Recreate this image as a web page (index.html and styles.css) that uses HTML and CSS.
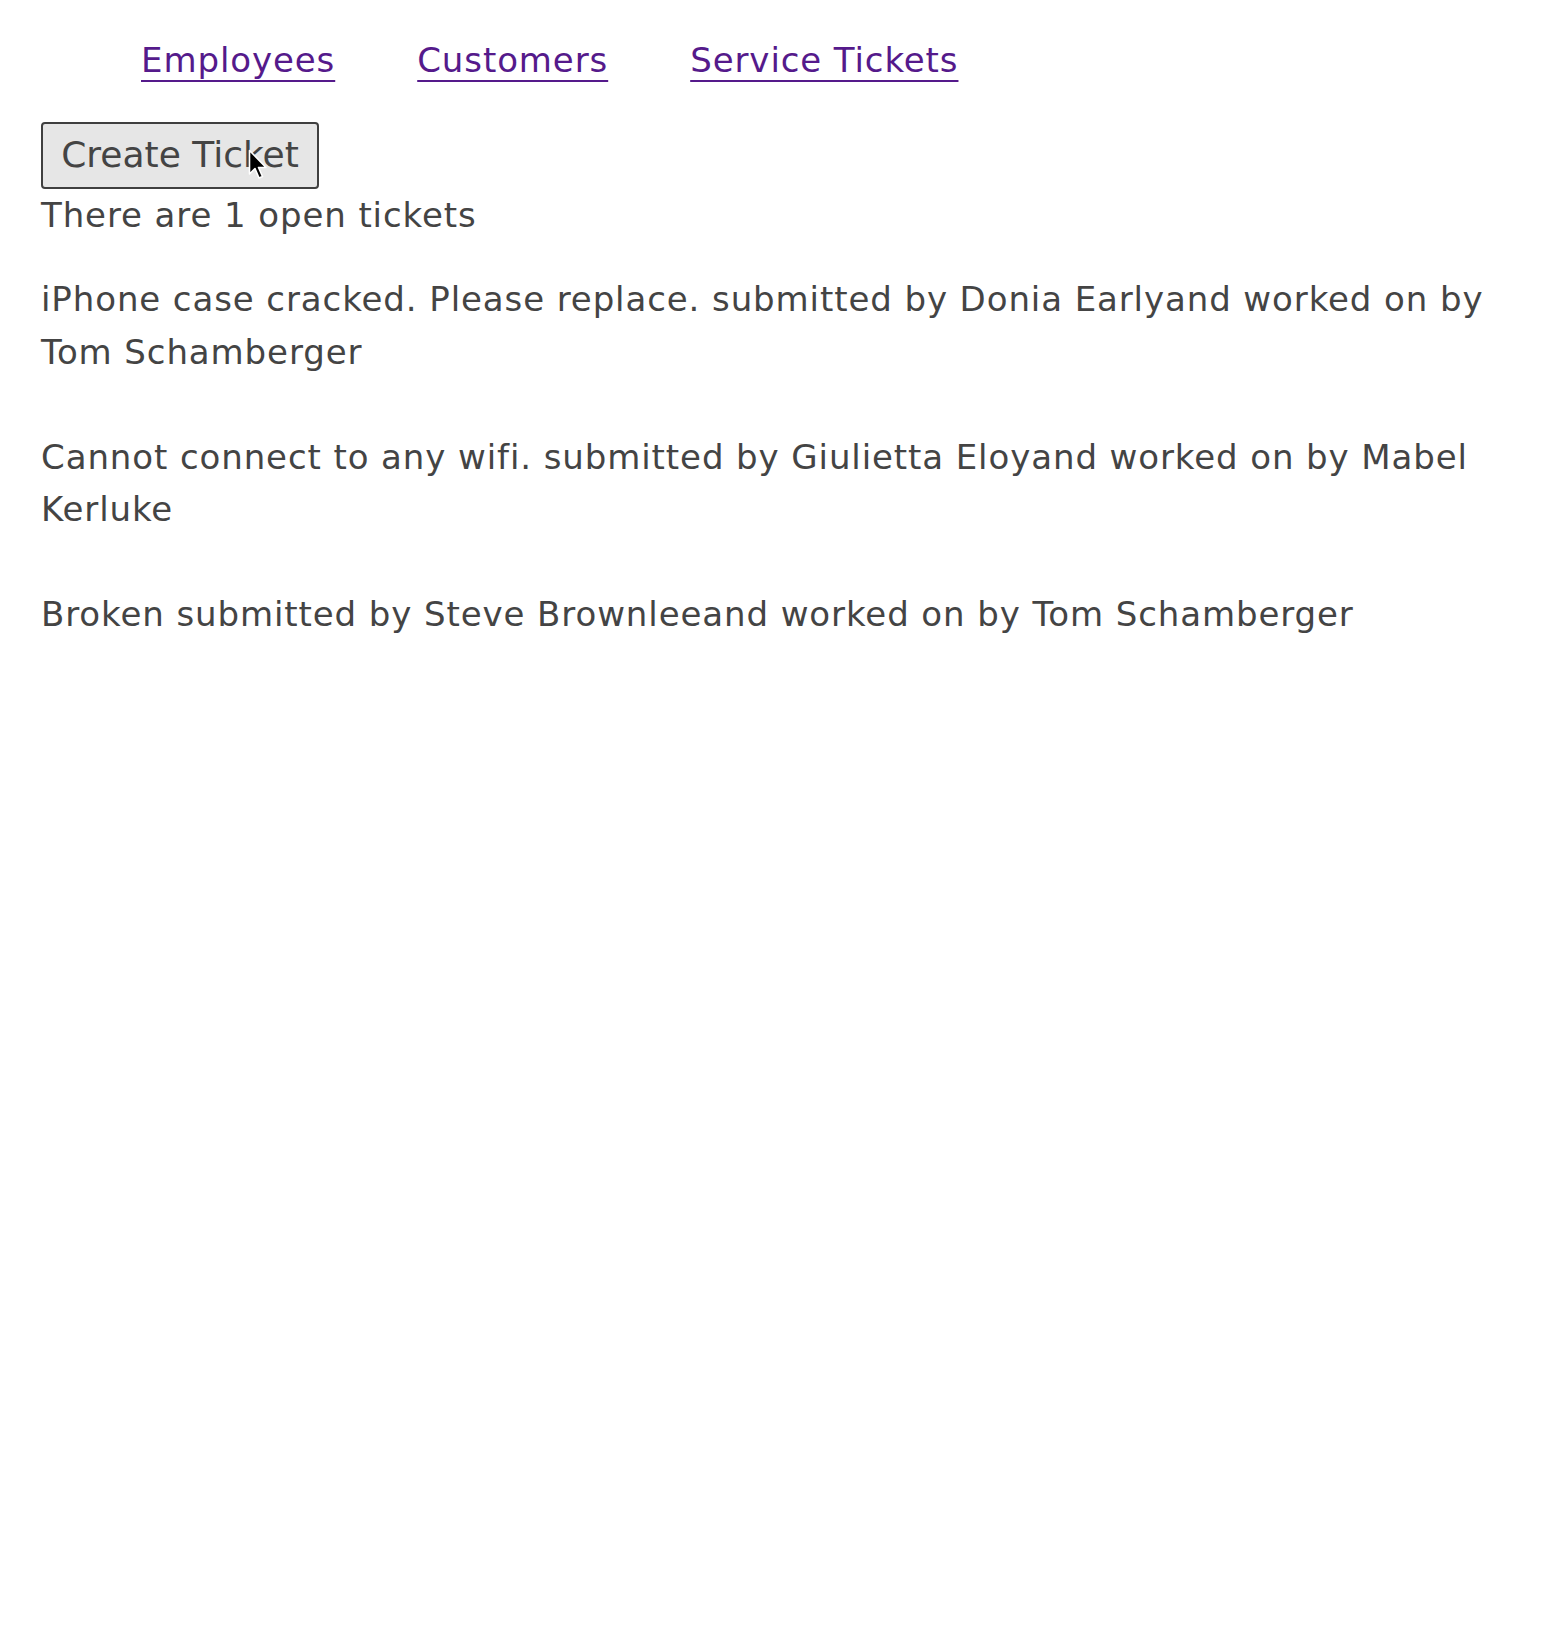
FILE: index.html
```
<!DOCTYPE html>
<html lang="en">
<head>
<meta charset="utf-8">
<title>Honey Rae Repairs</title>
<link rel="stylesheet" href="styles.css">
</head>
<body>
<div class="page">
  <nav class="navbar">
    <a class="nav-link" href="#">Employees</a>
    <a class="nav-link" href="#">Customers</a>
    <a class="nav-link" href="#">Service Tickets</a>
  </nav>
  <div class="actions">
    <button class="btn">Create Ticket</button>
    <svg class="cursor" width="20" height="32" viewBox="0 0 20 32" aria-hidden="true">
      <path d="M1.5 1.5 L1.5 25 L7 19.5 L11 29 L14.5 27.5 L10.5 18.5 L18 18.5 Z" fill="#000" stroke="#fff" stroke-width="1.6" stroke-linejoin="round"/>
    </svg>
  </div>
  <div class="count">There are 1 open tickets</div>
  <section class="tickets">
    <p class="ticket">iPhone case cracked. Please replace. submitted by Donia Earlyand worked on by Tom Schamberger</p>
    <p class="ticket">Cannot connect to any wifi. submitted by Giulietta Eloyand worked on by Mabel Kerluke</p>
    <p class="ticket">Broken submitted by Steve Brownleeand worked on by Tom Schamberger</p>
  </section>
</div>
</body>
</html>
```
FILE: styles.css
```
html, body {
  margin: 0;
  padding: 0;
  background: #fff;
}

body {
  font-family: "DejaVu Sans", "Noto Sans", sans-serif;
  font-size: 34px;
  letter-spacing: 0.9px;
  color: #444;
}

.page {
  padding: 35px 41px 0 41px;
}

.navbar {
  display: flex;
  gap: 82px;
  padding-left: 100px;
  line-height: 50px;
}

.nav-link {
  color: #551a8b;
  text-decoration: underline;
  text-decoration-thickness: 2px;
  text-underline-offset: 8px;
}

.actions {
  position: relative;
  margin-top: 37px;
  height: 67px;
}

.btn {
  display: block;
  box-sizing: border-box;
  width: 278px;
  height: 67px;
  padding: 0 16px 2px 16px;
  font-family: "DejaVu Sans", "Noto Sans", sans-serif;
  font-size: 36px;
  letter-spacing: 0;
  color: #444;
  background: #e6e6e6;
  border: 2px solid #3f3f3f;
  border-radius: 4px;
  text-align: center;
  white-space: nowrap;
}

.cursor {
  position: absolute;
  left: 207px;
  top: 27px;
}

.count {
  line-height: 52.5px;
}

.tickets {
  margin-top: 31.5px;
}

.ticket {
  margin: 0 0 52.5px 0;
  line-height: 52.5px;
}
```
